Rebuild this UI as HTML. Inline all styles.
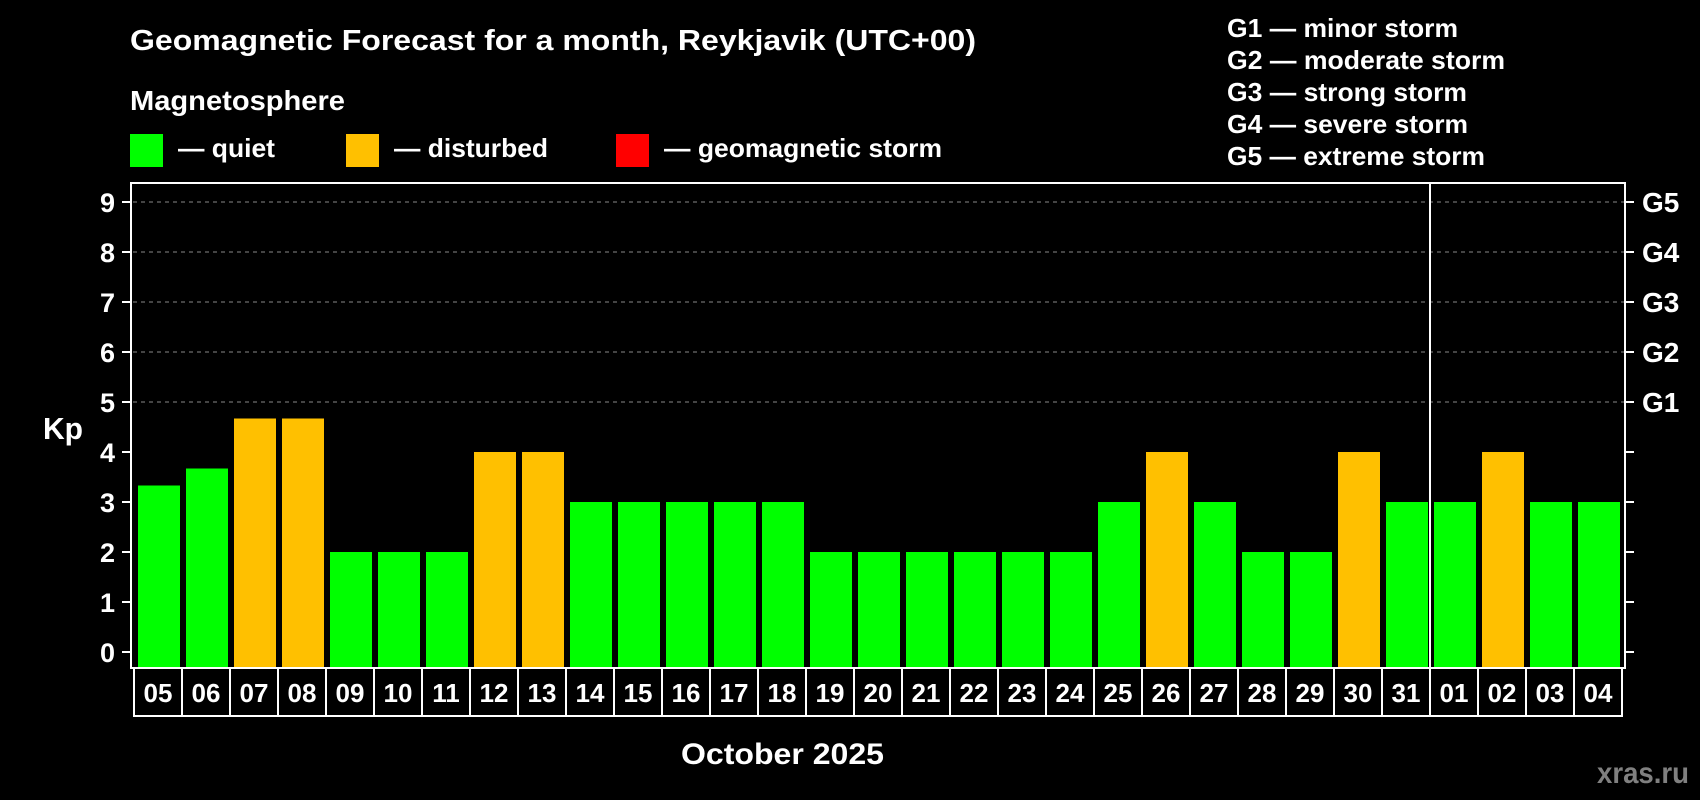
<!DOCTYPE html>
<html><head><meta charset="utf-8"><style>
html,body{margin:0;padding:0;background:#000;width:1700px;height:800px;overflow:hidden}
svg{display:block}
text{font-family:"Liberation Sans",Arial,sans-serif;font-weight:bold;fill:#fff}
</style></head><body>
<svg width="1700" height="800" viewBox="0 0 1700 800" xmlns="http://www.w3.org/2000/svg">
<rect width="1700" height="800" fill="#000"/>
<text x="130" y="50" font-size="29" textLength="846" lengthAdjust="spacingAndGlyphs">Geomagnetic Forecast for a month, Reykjavik (UTC+00)</text>
<text x="130" y="110" font-size="28" textLength="215" lengthAdjust="spacingAndGlyphs">Magnetosphere</text>
<rect x="130" y="134" width="33" height="33" fill="#00ff00"/>
<text x="178" y="157" font-size="26" textLength="97" lengthAdjust="spacingAndGlyphs">— quiet</text>
<rect x="346" y="134" width="33" height="33" fill="#ffc000"/>
<text x="394" y="157" font-size="26" textLength="154" lengthAdjust="spacingAndGlyphs">— disturbed</text>
<rect x="616" y="134" width="33" height="33" fill="#ff0000"/>
<text x="664" y="157" font-size="26" textLength="278" lengthAdjust="spacingAndGlyphs">— geomagnetic storm</text>
<g font-size="26">
<text x="1227" y="37" textLength="231" lengthAdjust="spacingAndGlyphs">G1 — minor storm</text>
<text x="1227" y="69" textLength="278" lengthAdjust="spacingAndGlyphs">G2 — moderate storm</text>
<text x="1227" y="101" textLength="240" lengthAdjust="spacingAndGlyphs">G3 — strong storm</text>
<text x="1227" y="133" textLength="241" lengthAdjust="spacingAndGlyphs">G4 — severe storm</text>
<text x="1227" y="165" textLength="258" lengthAdjust="spacingAndGlyphs">G5 — extreme storm</text>
</g>
<text x="43" y="439" font-size="31" textLength="40" lengthAdjust="spacingAndGlyphs">Kp</text>
<g stroke="#888" stroke-width="1" stroke-dasharray="4,4">
<line x1="133" y1="202" x2="1624" y2="202"/><line x1="133" y1="252" x2="1624" y2="252"/>
<line x1="133" y1="302" x2="1624" y2="302"/><line x1="133" y1="352" x2="1624" y2="352"/>
<line x1="133" y1="402" x2="1624" y2="402"/>
</g>
<g fill="#00ff00">
<rect x="138" y="485.5" width="42" height="183"/>
<rect x="186" y="468.5" width="42" height="200"/>
<rect x="330" y="552" width="42" height="117"/>
<rect x="378" y="552" width="42" height="117"/>
<rect x="426" y="552" width="42" height="117"/>
<rect x="570" y="502" width="42" height="167"/>
<rect x="618" y="502" width="42" height="167"/>
<rect x="666" y="502" width="42" height="167"/>
<rect x="714" y="502" width="42" height="167"/>
<rect x="762" y="502" width="42" height="167"/>
<rect x="810" y="552" width="42" height="117"/>
<rect x="858" y="552" width="42" height="117"/>
<rect x="906" y="552" width="42" height="117"/>
<rect x="954" y="552" width="42" height="117"/>
<rect x="1002" y="552" width="42" height="117"/>
<rect x="1050" y="552" width="42" height="117"/>
<rect x="1098" y="502" width="42" height="167"/>
<rect x="1194" y="502" width="42" height="167"/>
<rect x="1242" y="552" width="42" height="117"/>
<rect x="1290" y="552" width="42" height="117"/>
<rect x="1386" y="502" width="42" height="167"/>
<rect x="1434" y="502" width="42" height="167"/>
<rect x="1530" y="502" width="42" height="167"/>
<rect x="1578" y="502" width="42" height="167"/>
</g>
<g fill="#ffc000">
<rect x="234" y="418.5" width="42" height="250"/>
<rect x="282" y="418.5" width="42" height="250"/>
<rect x="474" y="452" width="42" height="217"/>
<rect x="522" y="452" width="42" height="217"/>
<rect x="1146" y="452" width="42" height="217"/>
<rect x="1338" y="452" width="42" height="217"/>
<rect x="1482" y="452" width="42" height="217"/>
</g>
<g stroke="#fff" stroke-width="2" fill="none">
<rect x="131" y="183" width="1494" height="485"/>
<line x1="1430" y1="183" x2="1430" y2="716"/>
<path d="M134 668V716H1622V668"/>
<path d="M182 668V716M230 668V716M278 668V716M326 668V716M374 668V716M422 668V716M470 668V716M518 668V716M566 668V716M614 668V716M662 668V716M710 668V716M758 668V716M806 668V716M854 668V716M902 668V716M950 668V716M998 668V716M1046 668V716M1094 668V716M1142 668V716M1190 668V716M1238 668V716M1286 668V716M1334 668V716M1382 668V716M1478 668V716M1526 668V716M1574 668V716"/>
<path d="M122 202H131M122 252H131M122 302H131M122 352H131M122 402H131M122 452H131M122 502H131M122 552H131M122 602H131M122 652H131"/>
<path d="M1625 202H1634M1625 252H1634M1625 302H1634M1625 352H1634M1625 402H1634M1625 452H1634M1625 502H1634M1625 552H1634M1625 602H1634M1625 652H1634"/>
</g>
<g font-size="27" text-anchor="end">
<text x="115" y="212">9</text><text x="115" y="262">8</text><text x="115" y="312">7</text>
<text x="115" y="362">6</text><text x="115" y="412">5</text><text x="115" y="462">4</text>
<text x="115" y="512">3</text><text x="115" y="562">2</text><text x="115" y="612">1</text>
<text x="115" y="662">0</text>
</g>
<g font-size="28">
<text x="1642" y="212">G5</text><text x="1642" y="262">G4</text><text x="1642" y="312">G3</text>
<text x="1642" y="362">G2</text><text x="1642" y="412">G1</text>
</g>
<g font-size="26" text-anchor="middle">
<text x="158" y="702">05</text><text x="206" y="702">06</text><text x="254" y="702">07</text>
<text x="302" y="702">08</text><text x="350" y="702">09</text><text x="398" y="702">10</text>
<text x="446" y="702">11</text><text x="494" y="702">12</text><text x="542" y="702">13</text>
<text x="590" y="702">14</text><text x="638" y="702">15</text><text x="686" y="702">16</text>
<text x="734" y="702">17</text><text x="782" y="702">18</text><text x="830" y="702">19</text>
<text x="878" y="702">20</text><text x="926" y="702">21</text><text x="974" y="702">22</text>
<text x="1022" y="702">23</text><text x="1070" y="702">24</text><text x="1118" y="702">25</text>
<text x="1166" y="702">26</text><text x="1214" y="702">27</text><text x="1262" y="702">28</text>
<text x="1310" y="702">29</text><text x="1358" y="702">30</text><text x="1406" y="702">31</text>
<text x="1454" y="702">01</text><text x="1502" y="702">02</text><text x="1550" y="702">03</text>
<text x="1598" y="702">04</text>
</g>
<text x="681" y="764" font-size="30" textLength="203" lengthAdjust="spacingAndGlyphs">October 2025</text>
<text x="1597" y="783" font-size="30" style="fill:#808080" textLength="92" lengthAdjust="spacingAndGlyphs">xras.ru</text>
</svg>
</body></html>
